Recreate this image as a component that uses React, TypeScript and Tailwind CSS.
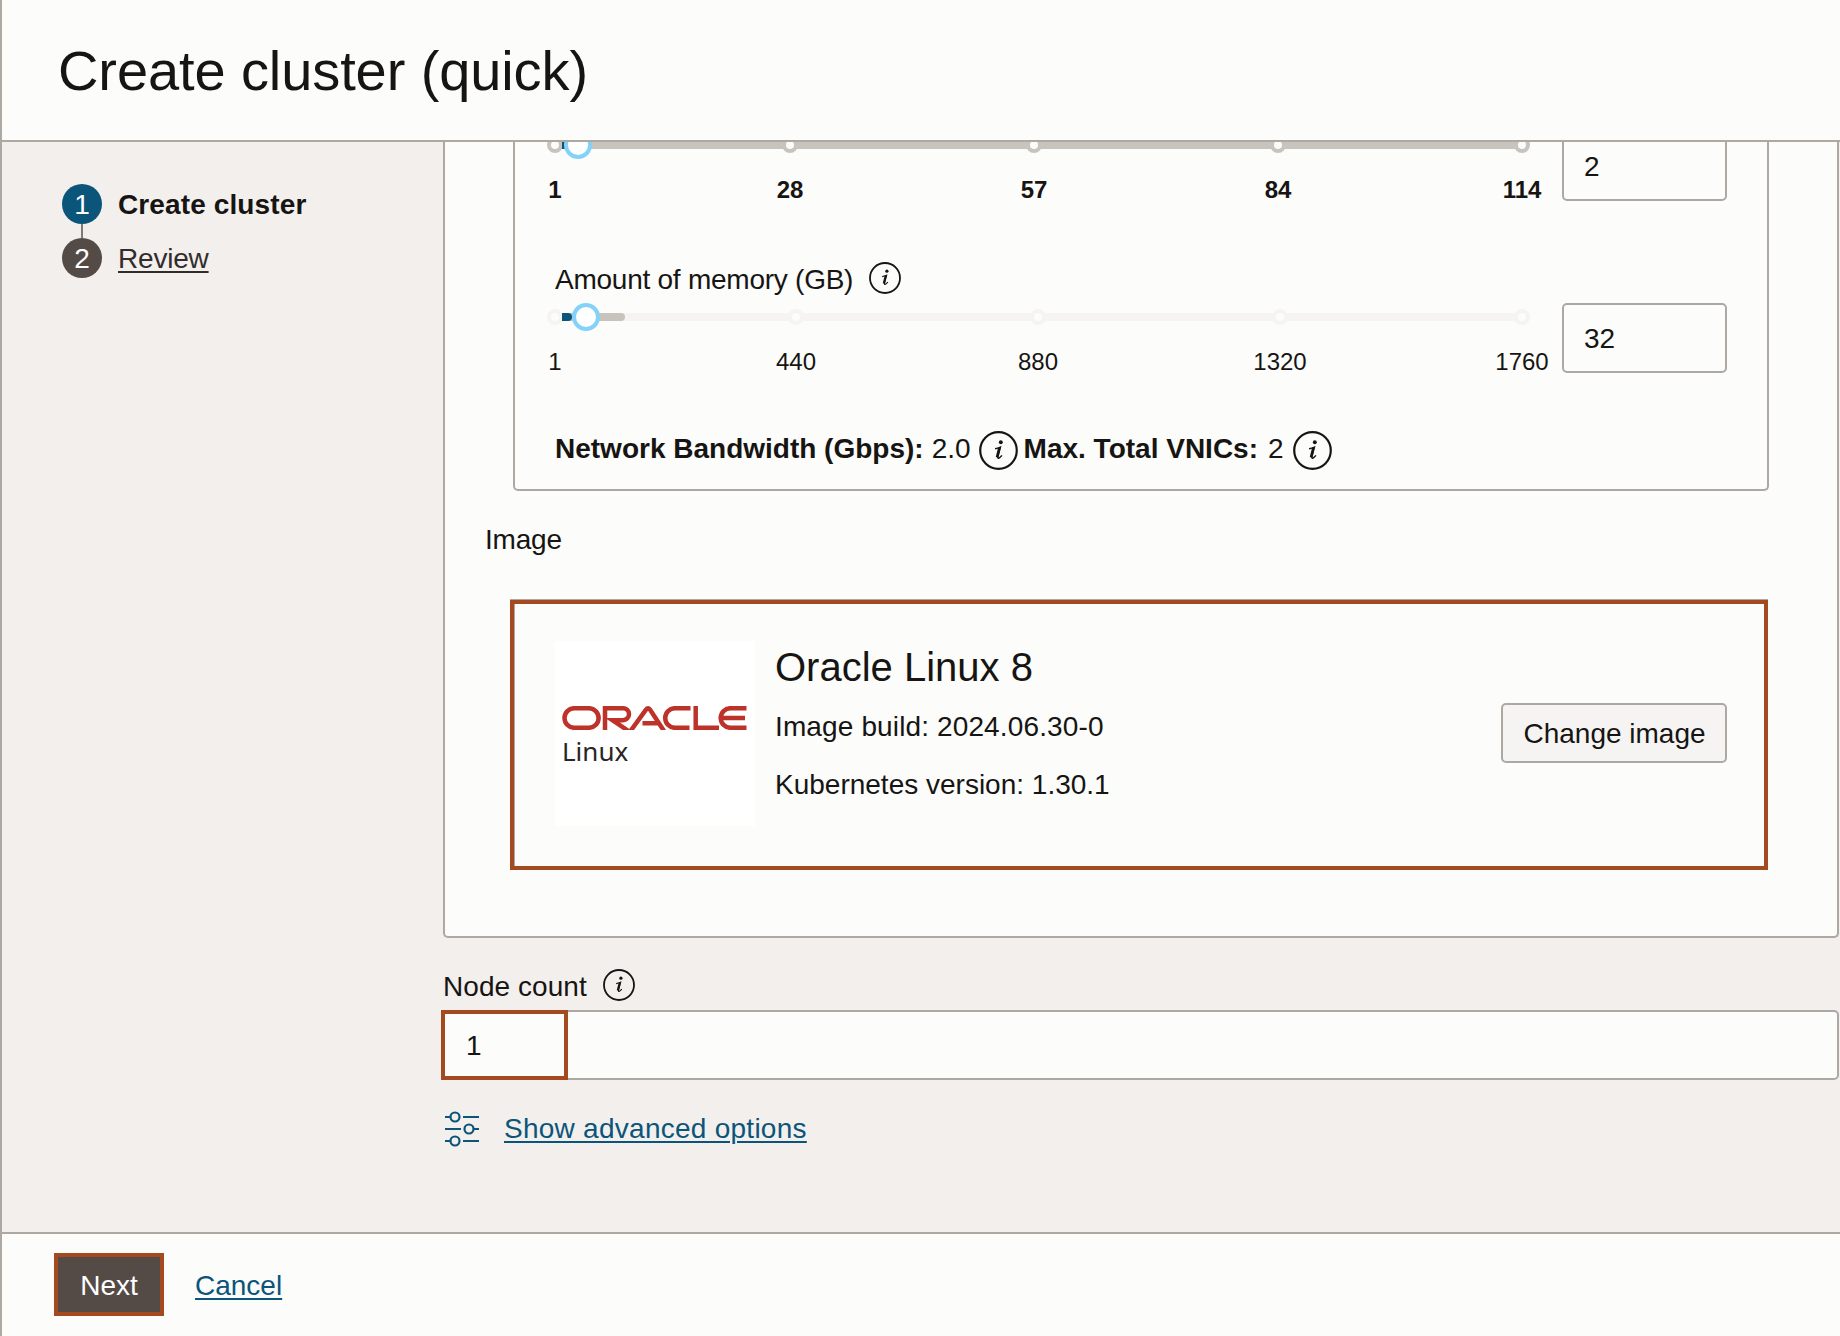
import React from "react";

function InfoIcon({ size, className = "" }: { size: number; className?: string }) {
  return (
    <svg width={size} height={size} viewBox="0 0 32 32" fill="none" className={"shrink-0 " + className}>
      <circle cx="16" cy="16" r="15" stroke="#161513" strokeWidth="1.8" />
      <circle cx="17.9" cy="9.2" r="1.6" fill="#161513" />
      <path d="M13.2 14.6 Q15.4 14.2 17.6 13.2 L15.5 21.2 Q15.2 22.8 16.4 22.2 Q17.6 21.6 18.8 20" stroke="#161513" strokeWidth="1.2" />
      <path d="M16.7 13.8 L14.8 21.6" stroke="#161513" strokeWidth="2.1" />
    </svg>
  );
}

function OracleLogo() {
  return (
    <svg width="186" height="24" viewBox="0 0 186 24" fill="none" stroke="#bd3329" strokeWidth="4.5">
      <path d="M12.3 2.2 H26.8 A9.8 9.8 0 0 1 26.8 21.8 H12.3 A9.8 9.8 0 0 1 12.3 2.2 Z" />
      <path d="M43 24 V2.2 H61 A6 6 0 0 1 61 14.2 H50.5 L66.5 25" />
      <path d="M68.5 25 L84 3.6 Q86 1 88 3.6 L102 25 M80.5 17.3 H96.5" />
      <path d="M128.5 2.2 H113 A9.8 9.8 0 0 0 113 21.8 H127.5" />
      <path d="M133.7 0 V21.8 H157" />
      <path d="M184.5 2.2 H168.5 A9.8 9.8 0 0 0 168.5 21.8 H184.5 M160.5 12 H183" />
    </svg>
  );
}

type Stop = { label: string; at: number };

function Slider({
  stops, thumb, fill, limit, bold,
}: { stops: Stop[]; thumb: number; fill: number; limit: number; bold?: boolean }) {
  return (
    <div className="relative h-[70px] w-[967px] shrink-0">
      <div className="absolute left-2 top-[10px] h-2 w-[967px] bg-[#f5f4f2]" />
      <div className="absolute left-2 top-[10px] h-2 rounded-r-full bg-[#c9c3bd]" style={{ width: limit }} />
      {stops.map((s) => (
        <div
          key={s.label}
          className={"absolute top-[6px] size-4 -translate-x-1/2 rounded-full border-4 bg-[#fcfcfa] " + (bold ? "border-[#c9c3bd]" : "border-[#f5f4f2]")}
          style={{ left: s.at }}
        />
      ))}
      <div className="absolute left-[15px] top-[10px] h-2 rounded-r-full bg-[#0b557a]" style={{ width: fill }} />
      <div className="absolute top-0 size-7 -translate-x-1/2 rounded-full border-4 border-[#84d2fa] bg-white" style={{ left: thumb }} />
      {stops.map((s) => (
        <div
          key={s.label}
          className={"absolute top-[45px] -translate-x-1/2 text-2xl leading-7 " + (bold ? "font-bold" : "")}
          style={{ left: s.at }}
        >
          {s.label}
        </div>
      ))}
    </div>
  );
}

function NumberBox({ value }: { value: string }) {
  return (
    <div className="flex h-[70px] w-[165px] items-center rounded-[5px] border-2 border-[#aea8a2] bg-[#fcfcfa] pl-5 pt-[2px]">
      {value}
    </div>
  );
}

export default function App() {
  return (
    <div className="flex h-[1336px] w-[1840px] flex-col overflow-hidden border-l-2 border-[#aea8a2] bg-[#f3efed] font-['Liberation_Sans',Arial,sans-serif] text-[28px] leading-8 text-[#161513]">
      <header className="flex h-[142px] shrink-0 items-center border-b-2 border-[#aea8a2] bg-[#fcfcfa] pl-14 pt-[2px]">
        <h1 className="text-[56px] leading-[64px] tracking-[-0.1px]">Create cluster (quick)</h1>
      </header>

      <div className="flex h-[1090px] shrink-0">
        <aside className="w-[441px] shrink-0 pl-[60px] pt-[42px]">
          <div className="flex items-center gap-4">
            <div className="flex size-10 items-center justify-center rounded-full bg-[#0b557a] pt-[2px] text-white">1</div>
            <span className="pt-[2px] font-bold tracking-[0.12px]">Create cluster</span>
          </div>
          <div className="ml-[19px] h-[14px] w-[2px] bg-[#7f7a77]" />
          <div className="flex items-center gap-4">
            <div className="flex size-10 items-center justify-center rounded-full bg-[#544b47] pt-[2px] text-white">2</div>
            <span className="pt-[2px] tracking-[-0.2px] text-[#312d2a] underline decoration-2 underline-offset-[3px]">Review</span>
          </div>
        </aside>

        <main className="flex min-w-0 flex-1 flex-col">
          <section className="h-[796px] w-[1396px] shrink-0 rounded-b-[5px] border-2 border-t-0 border-[#aea8a2] bg-[#fcfcfa] px-[68px]">
            <div className="h-[349px] w-[1256px] overflow-hidden rounded-b-[5px] border-2 border-t-0 border-[#aea8a2] pl-8">
              <div className="-mt-[11px] flex">
                <Slider
                  bold
                  thumb={31}
                  fill={6}
                  limit={967}
                  stops={[
                    { label: "1", at: 8 },
                    { label: "28", at: 243 },
                    { label: "57", at: 487 },
                    { label: "84", at: 731 },
                    { label: "114", at: 975 },
                  ]}
                />
                <div className="ml-12">
                  <NumberBox value="2" />
                </div>
              </div>
              <div className="mt-[61px] flex h-[41px] items-start gap-4 pl-2">
                <span className="mt-[2px] tracking-[-0.25px]">Amount of memory (GB)</span>
                <InfoIcon size={32} />
              </div>
              <div className="flex">
                <Slider
                  thumb={39}
                  fill={10}
                  limit={70}
                  stops={[
                    { label: "1", at: 8 },
                    { label: "440", at: 249 },
                    { label: "880", at: 491 },
                    { label: "1320", at: 733 },
                    { label: "1760", at: 975 },
                  ]}
                />
                <div className="ml-12">
                  <NumberBox value="32" />
                </div>
              </div>
              <div className="mt-[58px] flex h-10 items-center pl-2">
                <span className="pb-[5px] font-bold">Network Bandwidth (Gbps):</span>
                <span className="ml-2 pb-[5px]">2.0</span>
                <InfoIcon size={39} className="mb-px ml-2" />
                <span className="ml-1.5 pb-[5px] font-bold">Max. Total VNICs:</span>
                <span className="ml-[10px] pb-[5px]">2</span>
                <InfoIcon size={39} className="mb-px ml-[9px]" />
              </div>
            </div>

            <div className="-ml-7 mt-[33px] tracking-[-0.2px]">Image</div>

            <div className="-ml-[3px] mt-[44px] flex h-[270px] w-[1258px] border-4 border-[#a34a21] pl-[41px] pr-[37px] shadow-[inset_1px_0_0_#aea8a2,0_-1px_0_#aea8a2]">
              <div className="mt-[37px] h-[185px] w-[200px] shrink-0 bg-white pl-[7px] pt-[65px]">
                <OracleLogo />
                <div className="mt-[5px] font-['Noto_Sans',sans-serif] text-[26px] leading-8 text-[#2a2522]">Linux</div>
              </div>
              <div className="ml-5 flex-1 pt-[41px]">
                <div className="text-[40px] leading-[44px]">Oracle Linux 8</div>
                <div className="mt-[22px] tracking-[0.13px]">Image build: 2024.06.30-0</div>
                <div className="mt-[26px]">Kubernetes version: 1.30.1</div>
              </div>
              <button className="mt-[99px] h-[60px] w-[226px] rounded-[5px] border-2 border-[#aea8a2] bg-[#f5f4f2] pl-[1px] pt-[2px]">
                Change image
              </button>
            </div>
          </section>

          <div className="mt-[31px] flex h-8 items-center gap-4">
            <span className="pt-1 tracking-[0.05px]">Node count</span>
            <InfoIcon size={32} />
          </div>
          <div className="relative mt-[9px] flex h-[70px] w-[1396px] items-center rounded-[5px] border-2 border-[#aea8a2] bg-[#fcfcfa] pl-[21px] pt-[1px]">
            1
            <div className="absolute -left-1 -top-[2px] h-[70px] w-[127px] border-4 border-[#a34a21]" />
          </div>
          <div className="mt-[31px] flex items-center gap-[25px] text-[#0b557a]">
            <svg width="36" height="36" viewBox="0 0 36 36" fill="none" stroke="#0b557a" strokeWidth="2.2">
              <path d="M2 6 H7 M20 6 H36 M2 18 H18 M31 18 H36 M2 30 H7 M20 30 H36" />
              <circle cx="12" cy="6" r="4.5" />
              <circle cx="26" cy="18" r="4.5" />
              <circle cx="12" cy="30" r="4.5" />
            </svg>
            <span className="tracking-[0.26px] underline decoration-2 underline-offset-[3px]">Show advanced options</span>
          </div>
        </main>
      </div>

      <footer className="flex flex-1 items-start border-t-2 border-[#aea8a2] bg-[#fcfcfa] pl-[52px] pt-[19px]">
        <button className="h-[63px] w-[110px] border-4 border-[#a34a21] bg-[#544b47] pt-[2px] text-white">Next</button>
        <span className="ml-[31px] mt-[17px] text-[#0b557a] underline decoration-2 underline-offset-[3px]">Cancel</span>
      </footer>
    </div>
  );
}
